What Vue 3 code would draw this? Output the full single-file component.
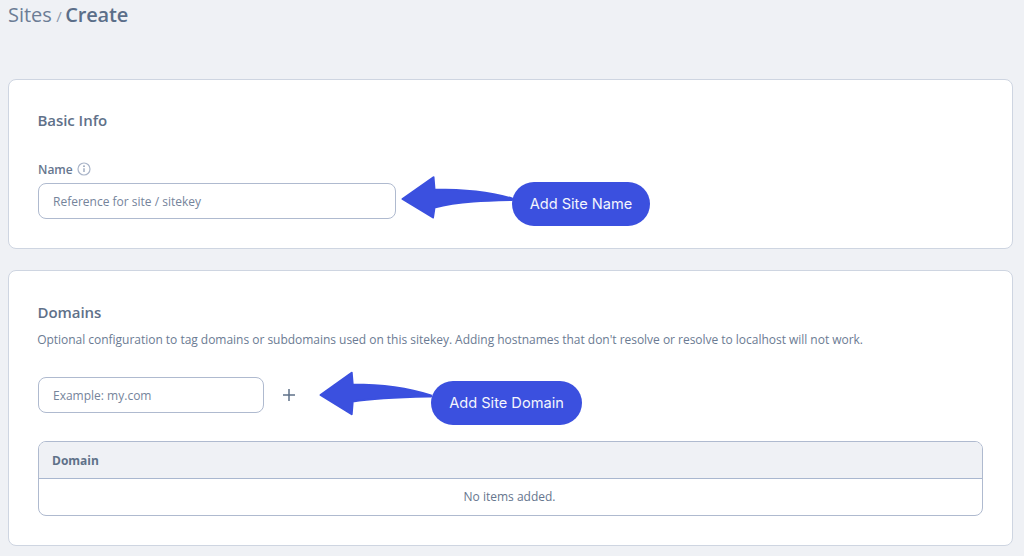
<script setup>
const domainCols = ['Domain']
</script>

<template>
  <div class="page">
    <header class="crumbs">
      <span class="crumb">Sites</span>
      <span class="sep">/</span>
      <span class="current">Create</span>
    </header>

    <section class="card first">
      <h2>Basic Info</h2>
      <div class="label-row">
        <label>Name</label>
        <svg class="info" width="14" height="14" viewBox="0 0 14 14" fill="none">
          <circle cx="7" cy="7" r="6" stroke="#aab5c9" stroke-width="1.2" />
          <path d="M7 6.200v3.900" stroke="#94a1b9" stroke-width="1.300" />
          <circle cx="7" cy="4.200" r=".9" fill="#94a1b9" />
        </svg>
      </div>
      <div class="field name-field">Reference for site / sitekey</div>
    </section>

    <section class="card second">
      <h2>Domains</h2>
      <p class="desc">Optional configuration to tag domains or subdomains used on this sitekey. Adding hostnames that don't resolve or resolve to localhost will not work.</p>
      <div class="add-row">
        <div class="field domain-field">Example: my.com</div>
        <svg class="plus" width="14" height="14" viewBox="0 0 14 14" fill="none">
          <path d="M7 1v12M1 7h12" stroke="#5f7189" stroke-width="1.500" />
        </svg>
      </div>
      <div class="table">
        <div class="thead">
          <span v-for="c in domainCols" :key="c">{{ c }}</span>
        </div>
        <div class="tbody">No items added.</div>
      </div>
    </section>

    <svg class="arrow arrow-name" width="114" height="46" viewBox="0 0 114 46">
      <path d="M2.500 24 33.500 2.200 34.500 14.500C60 14.500 90 17 112 23.500L112 25C90 25.500 60 26 34.500 32.500L33 42.500Z" fill="#3b50df" stroke="#3b50df" stroke-width="2" stroke-linejoin="round" />
    </svg>
    <svg class="arrow arrow-domain" width="116" height="46" viewBox="0 0 116 46">
      <path d="M2.500 24 33.700 1.700 34.700 13.500C60 13.500 90 17 113 24.500L113 25.500C90 26 60 26.500 34.700 30.500L33.700 43.200Z" fill="#3b50df" stroke="#3b50df" stroke-width="2" stroke-linejoin="round" />
    </svg>
    <div class="pill pill-name">Add Site Name</div>
    <div class="pill pill-domain">Add Site Domain</div>
  </div>
</template>

<style>
html, body { margin: 0; background: #eff1f5; }
</style>

<style scoped>
.page {
  position: relative;
  width: 1024px;
  height: 556px;
  overflow: hidden;
  box-sizing: border-box;
  padding: 0 11px 0 8px;
  background: #eff1f5;
  font-family: "Open Sans", "Noto Sans", sans-serif;
  color: #5f7189;
}
.crumbs {
  display: flex;
  align-items: baseline;
  height: 79px;
  line-height: 30px;
  color: #6c7d95;
}
.crumb { font-size: 20px; letter-spacing: -0.05px; }
.sep { font-size: 15px; margin: 0 3.500px 0 4.500px; color: #8a98ad; }
.current { font-size: 20px; font-weight: 600; letter-spacing: -0.15px; color: #5b6e89; }
.card {
  box-sizing: border-box;
  background: #fff;
  border: 1px solid #ced5e1;
  border-radius: 8px;
  padding: 0 29px;
}
.first { height: 170px; padding-top: 29px; }
.second { height: 276px; margin-top: 21px; padding-top: 30px; }
h2 {
  margin: 0 0 0 -0.5px;
  font-size: 15px;
  font-weight: 600;
  letter-spacing: -0.05px;
  line-height: 22px;
  color: #5f7189;
}
.label-row {
  display: flex;
  align-items: center;
  gap: 4px;
  height: 18px;
  margin-top: 29px;
}
label { font-size: 12px; font-weight: 600; color: #66768e; }
.field {
  box-sizing: border-box;
  height: 36px;
  border: 1px solid #afbacf;
  border-radius: 8px;
  background: #fff;
  padding-left: 14px;
  font-size: 12px;
  line-height: 35px;
  color: #75849b;
}
.name-field { width: 358px; margin-top: 5px; }
.desc {
  margin: 8px 0 0 -0.8px;
  font-size: 12px;
  letter-spacing: -0.025px;
  line-height: 18px;
  color: #6b7b93;
  white-space: nowrap;
}
.add-row {
  display: flex;
  align-items: center;
  gap: 18px;
  margin-top: 28px;
}
.domain-field { width: 226px; }
.plus { margin-left: -0.5px; }
.table {
  box-sizing: border-box;
  width: 945px;
  height: 75px;
  margin-top: 28px;
  border: 1px solid #afbacf;
  border-radius: 8px;
  overflow: hidden;
}
.thead {
  box-sizing: border-box;
  height: 37px;
  padding-left: 13px;
  background: #eff1f5;
  border-bottom: 1px solid #a9b7cf;
  font-size: 12px;
  font-weight: 700;
  line-height: 37px;
  color: #5f7189;
}
.tbody {
  height: 36px;
  padding-right: 2px;
  text-align: center;
  font-size: 12px;
  line-height: 35px;
  color: #66768e;
}
.arrow { position: absolute; }
.arrow-name { left: 400px; top: 175px; }
.arrow-domain { left: 318px; top: 371px; }
.pill {
  position: absolute;
  box-sizing: border-box;
  height: 44px;
  border-radius: 22px;
  background: #3b50df;
  font-family: Inter, sans-serif;
  font-size: 14.6px;
  line-height: 44px;
  text-align: center;
  color: #f4f5fd;
}
.pill-name { left: 512px; top: 182px; width: 138px; }
.pill-domain { left: 431px; top: 381px; width: 151px; }
</style>
